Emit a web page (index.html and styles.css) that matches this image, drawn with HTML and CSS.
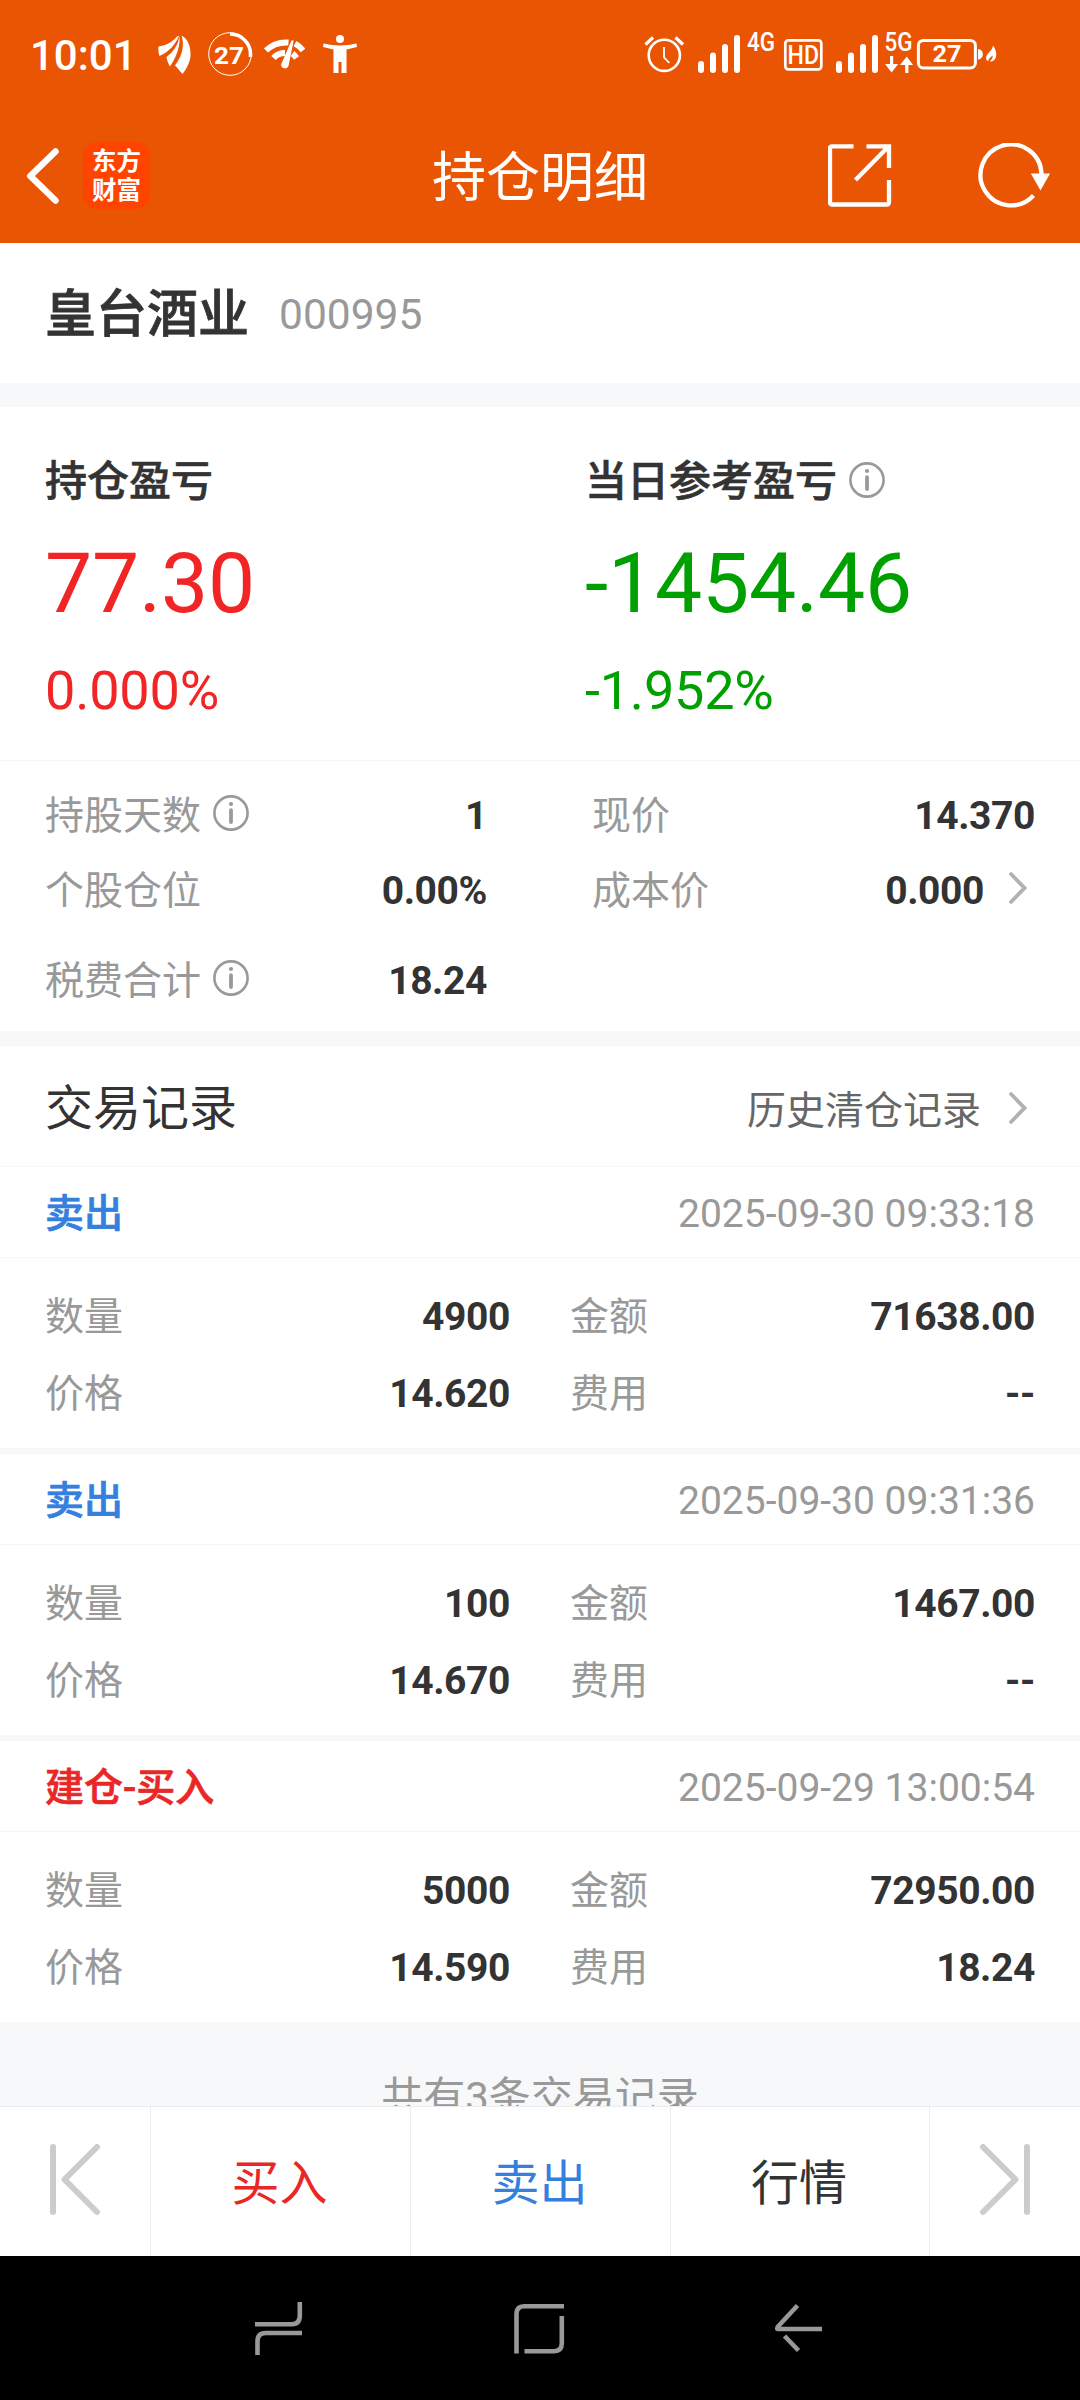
FILE: index.html
```html
<!DOCTYPE html>
<html lang="zh-CN">
<head>
<meta charset="utf-8">
<title>持仓明细</title>
<link rel="stylesheet" href="styles.css">
</head>
<body>
<svg class="defs" width="0" height="0" aria-hidden="true">
  <symbol id="info" viewBox="0 0 36 36">
    <circle cx="18" cy="18" r="16.6" fill="none" stroke="#999" stroke-width="2.6"/>
    <circle cx="18" cy="9" r="2.1" fill="#999"/>
    <path d="M18 15.2V27" stroke="#999" stroke-width="3.8" stroke-linecap="round"/>
  </symbol>
  <symbol id="chevron" viewBox="0 0 18 34">
    <path d="M2 3l13.5 14L2 31" fill="none" stroke="#b2b2b2" stroke-width="3.8" stroke-linecap="round"/>
  </symbol>
  <symbol id="signal" viewBox="0 0 42 38">
    <path d="M3 29v6M15 20.5V35M27 12v23M39 3v32" stroke="#fff" stroke-width="6" stroke-linecap="round"/>
  </symbol>
</svg>

<div class="screen">
  <header class="header">
    <div class="status">
      <div class="status-left">
        <span class="clock">10:01</span>
        <svg width="33" height="39" viewBox="158 34 33 39" fill="#fff">
          <path d="M158.4 45.5C165 45 173 41 178 34.6C177 42 169 51.5 159.500 55C158.500 52 158.200 49 158.400 45.500Z"/>
          <path d="M179.300 35C181 44 176 57 170 65.500C168 62 167 59 166.500 56C173 51 178.500 44 179.300 35Z"/>
          <path d="M181.500 34.600C188 38 191 46 190.500 55C190 61 186.500 68 182.500 73C179 69 177 66.500 175 64.500C183 54 184.500 44 181.500 34.600Z"/>
          <path d="M159 52.500C168 50 176 42 178.500 35" fill="none" stroke="#fff" stroke-width="1"/>
        </svg>
        <svg class="ring" width="46" height="46" viewBox="207 30 46 46">
          <circle cx="230" cy="53" r="21.300" fill="none" stroke="#fff" stroke-width="1"/>
          <path d="M230 33a20.300 20.300 0 0 1 20.300 23" fill="none" stroke="#fff" stroke-width="3.600"/>
          <text class="digits" x="229" y="62.500" text-anchor="middle" textLength="30" lengthAdjust="spacingAndGlyphs">27</text>
        </svg>
        <svg class="wifi" width="41" height="32" viewBox="264 38 41 32">
          <g fill="none" stroke="#fff" stroke-width="6">
            <path d="M266 50.500Q275 41.500 288.500 42.500M295 43.500Q299.500 46 303 50.500"/>
            <path d="M273.500 58Q278 53 285 53M292.500 53.500Q294.500 55 296.500 58"/>
          </g>
          <path d="M291.500 40.500h2.200L288.500 66a3.800 3.800 0 0 1-7.300-1.800z" fill="#fff"/>
        </svg>
        <svg class="person" width="34" height="38" viewBox="322.500 34 34 38" fill="#fff">
          <circle cx="339.500" cy="38" r="4"/>
          <path d="M323 42.500Q339.500 46.500 356 42.500L356.500 46L346 48.500V72H341V61H338V72H333V48.500L322.500 46Z"/>
        </svg>
      </div>
      <svg class="status-right" width="354" height="60" viewBox="643 24 354 60">
        <g fill="none" stroke="#fff">
          <circle cx="664.300" cy="55.300" r="15.600" stroke-width="2.600"/>
          <path d="M645.500 44.500l7.500-7M675.500 37.500l7.500 7" stroke-width="3.200"/>
          <path d="M664 47v10.300l5.300 5.700" stroke-width="1.800"/>
          <rect x="785.300" y="40.300" width="36" height="29" rx="3" stroke-width="2.700"/>
          <rect x="918.400" y="40.400" width="57" height="27.600" rx="5" stroke-width="3"/>
        </g>
        <use href="#signal" x="698" y="35" width="42" height="38"/>
        <use href="#signal" x="836" y="35" width="42" height="38"/>
        <text class="network" x="747" y="51" textLength="28" lengthAdjust="spacingAndGlyphs">4G</text>
        <text class="network" x="884.500" y="51" textLength="28" lengthAdjust="spacingAndGlyphs">5G</text>
        <text class="network" x="787.500" y="64" textLength="31.500" lengthAdjust="spacingAndGlyphs">HD</text>
        <text class="digits" x="947" y="62" text-anchor="middle" textLength="29" lengthAdjust="spacingAndGlyphs">27</text>
        <path d="M890 56h3.200v8h5l-6.600 8.500L885 64h5zM905.200 73h3.200v-8h4.600l-6.200-8.500L900 65h5.200z" fill="#fff"/>
        <path d="M978 49c6.500 0 6.500 10.500 0 10.500zM993 45.500c3 4 4 8.500 2.800 12c-1 3-3.500 4.200-6 4c2-2 3-4 3-6c-2.500 1.500-4 3.500-4.800 5.700c-3.500-2.200-1.500-6.200 1-8.700c2-2 3.500-4 4-7z" fill="#fff"/>
      </svg>
    </div>
    <div class="toolbar">
      <div class="toolbar-side">
        <svg width="34" height="58" viewBox="26 146 34 58">
          <path d="M55.500 150.500L30.300 175L55.500 199.500" fill="none" stroke="#fff" stroke-width="6.500" stroke-linecap="round" stroke-linejoin="round"/>
        </svg>
        <div class="logo">东方<br>财富</div>
      </div>
      <h1 class="title">持仓明细</h1>
      <div class="toolbar-side end">
        <svg width="64" height="64" viewBox="828 144 64 64">
          <path d="M853.500 146.300H832a2 2 0 0 0-2 2V202.500a2 2 0 0 0 2 2H887a2 2 0 0 0 2-2V180M866.500 146.300H889V168M887.500 147.500L855.500 180" fill="none" stroke="#fff" stroke-width="4.300"/>
        </svg>
        <svg width="72" height="66" viewBox="978 142 72 66">
          <path d="M1041.500 173A30.500 30.500 0 1 0 1033.500 194.500" fill="none" stroke="#fff" stroke-width="4.300"/>
          <path d="M1030.800 172.500H1050L1040.500 189.500Z" fill="#fff"/>
        </svg>
      </div>
    </div>
  </header>

  <main class="content">
    <section class="stock">
      <h2 class="stock-name">皇台酒业</h2>
      <span class="stock-code">000995</span>
    </section>

    <section class="profit">
      <div class="profit-col rise">
        <div class="profit-label">持仓盈亏</div>
        <div class="profit-amount">77.30</div>
        <div class="profit-rate">0.000%</div>
      </div>
      <div class="profit-col fall">
        <div class="profit-label">当日参考盈亏<svg class="icon-info"><use href="#info"/></svg></div>
        <div class="profit-amount">-1454.46</div>
        <div class="profit-rate">-1.952%</div>
      </div>
    </section>

    <section class="details">
      <div class="pair"><span class="label">持股天数<svg class="icon-info"><use href="#info"/></svg></span><b class="value">1</b></div>
      <div class="pair"><span class="label">现价</span><b class="value">14.370</b></div>
      <div class="pair"><span class="label">个股仓位</span><b class="value">0.00%</b></div>
      <div class="pair"><span class="label">成本价</span><b class="value">0.000<svg class="icon-chevron"><use href="#chevron"/></svg></b></div>
      <div class="pair last"><span class="label">税费合计<svg class="icon-info"><use href="#info"/></svg></span><b class="value">18.24</b></div>
    </section>

    <section class="records">
      <div class="records-head">
        <h3 class="records-title">交易记录</h3>
        <a class="history">历史清仓记录<svg class="icon-chevron"><use href="#chevron"/></svg></a>
      </div>

      <article class="record">
        <div class="record-head"><span class="side sell">卖出</span><time>2025-09-30 09:33:18</time></div>
        <div class="record-body">
          <div class="pair"><span class="label">数量</span><b class="value">4900</b></div>
          <div class="pair"><span class="label">金额</span><b class="value">71638.00</b></div>
          <div class="pair"><span class="label">价格</span><b class="value">14.620</b></div>
          <div class="pair"><span class="label">费用</span><b class="value">--</b></div>
        </div>
      </article>

      <article class="record">
        <div class="record-head"><span class="side sell">卖出</span><time>2025-09-30 09:31:36</time></div>
        <div class="record-body">
          <div class="pair"><span class="label">数量</span><b class="value">100</b></div>
          <div class="pair"><span class="label">金额</span><b class="value">1467.00</b></div>
          <div class="pair"><span class="label">价格</span><b class="value">14.670</b></div>
          <div class="pair"><span class="label">费用</span><b class="value">--</b></div>
        </div>
      </article>

      <article class="record">
        <div class="record-head"><span class="side buy">建仓-买入</span><time>2025-09-29 13:00:54</time></div>
        <div class="record-body">
          <div class="pair"><span class="label">数量</span><b class="value">5000</b></div>
          <div class="pair"><span class="label">金额</span><b class="value">72950.00</b></div>
          <div class="pair"><span class="label">价格</span><b class="value">14.590</b></div>
          <div class="pair"><span class="label">费用</span><b class="value">18.24</b></div>
        </div>
      </article>
    </section>

    <p class="summary">共有3条交易记录</p>
  </main>

  <nav class="actions">
    <a class="step">
      <svg width="52" height="74" viewBox="49 2143 52 74" fill="none" stroke="#ccc" stroke-width="6" stroke-linecap="round" stroke-linejoin="round"><path d="M53 2147v65M97 2147L64.500 2179.500L97 2212"/></svg>
    </a>
    <a class="action buy">买入</a>
    <a class="action sell">卖出</a>
    <a class="action">行情</a>
    <a class="step">
      <svg width="52" height="74" viewBox="979 2143 52 74" fill="none" stroke="#ccc" stroke-width="6" stroke-linecap="round" stroke-linejoin="round"><path d="M1027 2147v65M983 2147L1015.500 2179.500L983 2212"/></svg>
    </a>
  </nav>

  <div class="system-nav">
    <svg width="50" height="54" viewBox="254 2302 50 54"><path d="M299.800 2302V2315.500Q299.800 2324.200 292 2324.200H255M302 2333H265.500Q257.500 2333 257.500 2341.500V2355" fill="none" stroke="#999" stroke-width="4.600"/></svg>
    <svg width="52" height="54" viewBox="513 2302 52 54"><path d="M516.500 2353.500V2314Q516.500 2306.200 524 2306.200H564M561.800 2316V2343Q561.800 2351.200 554 2351.200H524.500" fill="none" stroke="#999" stroke-width="4.600"/></svg>
    <svg width="50" height="54" viewBox="775 2302 50 54"><path d="M798.500 2305.500L779.500 2326Q776.500 2329 780 2329H823M785.500 2336L799.500 2350.500" fill="none" stroke="#999" stroke-width="4.600"/></svg>
  </div>
</div>
</body>
</html>
```

FILE: styles.css
```css
* { box-sizing: border-box; margin: 0; padding: 0; }

body {
  width: 1080px;
  background: #fff;
  color: #333;
  font-family: Roboto, "Noto Sans CJK SC", sans-serif;
  font-size: 39px;
  line-height: 46px;
}

svg { display: block; flex: none; }
.defs { position: absolute; }

.screen { display: flex; flex-direction: column; height: 2400px; overflow: hidden; }

/* Header */
.header { height: 243px; flex: none; background: #ea5504; color: #fff; }
.status {
  display: flex;
  justify-content: space-between;
  height: 108px;
  padding: 0 83px 0 30px;
}
.status-left { display: flex; align-items: center; }
.clock { width: 128px; padding-top: 3px; font-size: 42px; font-weight: 500; line-height: 50px; white-space: nowrap; }
.ring { margin-left: 16px; }
.wifi { margin-left: 11px; }
.person { margin-left: 17.500px; }
.status-right { align-self: center; }
.digits { fill: #fff; font-size: 24px; font-weight: 700; }
.network { fill: #fff; font-size: 25.500px; font-weight: 500; }

.toolbar {
  display: grid;
  grid-template-columns: 1fr auto 1fr;
  align-items: center;
  height: 135px;
  padding: 0 30px 0 26px;
}
.toolbar-side { display: flex; align-items: center; }
.toolbar-side.end { justify-content: flex-end; gap: 86px; }
.title { font-size: 54px; font-weight: 400; line-height: 64px; padding: 7px 0 0 4px; }
.logo {
  width: 67px;
  height: 67px;
  margin-left: 23px;
  padding-top: 3px;
  border-radius: 14px;
  background: #ff4400;
  font-family: "Noto Sans CJK SC", sans-serif;
  font-size: 24.500px;
  font-weight: 700;
  line-height: 29px;
  text-align: center;
}

.content { flex: none; height: 1863px; overflow: hidden; background: #f7f8fa; }
.content section { background: #fff; }

/* Stock heading */
.stock { display: flex; align-items: center; height: 140px; padding: 3px 45px 0; }
.stock-name { font-size: 51px; font-weight: 500; line-height: 60px; -webkit-text-stroke: 0.8px; }
.stock-code { margin-left: 30px; color: #999; font-size: 42.500px; line-height: 60px; }

/* Profit and loss */
.profit { display: grid; grid-template-columns: 540px 540px; height: 354px; margin-top: 24px; padding-top: 45px; border-bottom: 1px solid #f5f6f8; }
.profit-col { padding-left: 45px; }
.profit-label { display: flex; align-items: center; color: #333; font-size: 42px; font-weight: 500; line-height: 60px; -webkit-text-stroke: 0.6px; }
.profit-amount { margin-top: 23px; font-size: 84px; line-height: 98px; letter-spacing: -0.2px; }
.profit-rate { margin-top: 26px; font-size: 54px; line-height: 63px; letter-spacing: -0.2px; }
.rise { color: #f12525; }
.fall { color: #00a000; }
.icon-info { width: 36px; height: 36px; margin: 0 0 4px 12px; }
.icon-chevron { width: 18px; height: 34px; }

/* Label and value pairs */
.pair { display: flex; justify-content: space-between; align-items: center; }
.label { display: flex; align-items: center; color: #999; }
.value { display: flex; align-items: center; font-weight: 700; letter-spacing: -0.4px; }

.details {
  display: grid;
  grid-template-columns: 442px 443px;
  grid-template-rows: 75px 75px 105px;
  column-gap: 105px;
  height: 270px;
  padding: 17px 45px 0;
}
.details .icon-info { margin-bottom: 6px; }
.details .icon-chevron { margin: 0 8px 5px 25px; }

/* Transaction records */
.records { margin-top: 15px; }
.records-head {
  display: flex;
  justify-content: space-between;
  align-items: center;
  height: 121px;
  padding: 5px 53px 0 45px;
  border-bottom: 1px solid #f5f6f8;
}
.records-title { font-size: 48px; font-weight: 400; line-height: 60px; }
.history { display: flex; align-items: center; padding-top: 4px; color: #666; }
.history .icon-chevron { margin: 0 0 6px 28px; }

.record + .record { border-top: 6px solid #f7f8fa; }
.record-head {
  display: flex;
  justify-content: space-between;
  align-items: center;
  height: 91px;
  padding: 3px 45px 0;
  border-bottom: 1px solid #f5f6f8;
}
.side { font-weight: 500; -webkit-text-stroke: 0.7px; }
time { color: #999; }
.buy { color: #e92727; }
.sell { color: #3580df; }
.record-body {
  display: grid;
  grid-template-columns: 465px 465px;
  grid-template-rows: 77px 77px;
  column-gap: 60px;
  height: 190px;
  padding: 20px 45px 0;
}

.summary { padding-top: 51px; color: #999; font-size: 42px; line-height: 50px; text-align: center; }

/* Bottom action bar */
.actions {
  display: grid;
  grid-template-columns: 150px 260px 260px 259px 151px;
  flex: none;
  height: 150px;
  border-top: 1px solid #ebecee;
  background: #fff;
}
.actions a { display: flex; align-items: center; justify-content: center; }
.actions a + a { border-left: 1px solid #ebecee; }
.actions .action { padding: 5px 2px 0 0; font-size: 48px; line-height: 56px; }
.actions .step { padding-bottom: 4px; }

/* System navigation */
.system-nav { display: flex; gap: 209px; flex: none; height: 144px; padding: 46px 0 0 254px; background: #000; }
```
